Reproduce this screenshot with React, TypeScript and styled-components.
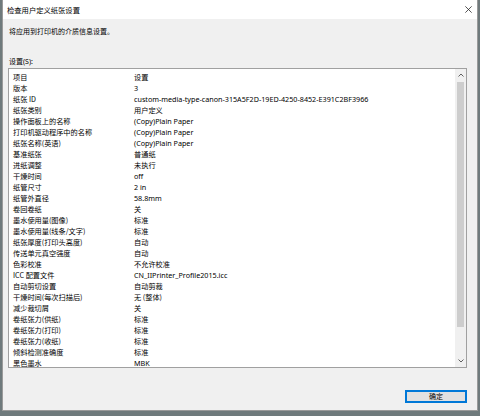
import styled, { createGlobalStyle } from "styled-components";

const GlobalStyle = createGlobalStyle`
    html, body {
        margin: 0;
        padding: 0;
        background: #6f7a7c;
    }
    body {
        font-family: "Noto Sans", "Noto Sans CJK SC", sans-serif;
        color: #000;
    }
`;

const Window = styled.div`
    width: 476px;
    height: 411px;
    margin-left: 2px;
    background: #f0f0f0;
    border: 1px solid #9a9a9a;
    border-top: none;
    box-sizing: border-box;
    display: flex;
    flex-direction: column;
`;

const TitleBar = styled.div`
    height: 19px;
    background: #fff;
    display: flex;
    align-items: center;
    justify-content: space-between;
    padding: 0 5px 0 4px;
    font-size: 7.3px;
    font-family: "Noto Sans CJK SC", sans-serif;
`;

const CloseIcon = styled.svg`
    width: 7px;
    height: 7px;
    margin-top: -1px;
`;

const Body = styled.div`
    flex: 1;
    display: flex;
    flex-direction: column;
    padding: 7px 10px 0 5px;
`;

const Description = styled.div`
    font-size: 7px;
    line-height: 11px;
    font-family: "Noto Sans CJK SC", sans-serif;
    margin-left: 1px;
`;

const FieldLabel = styled.div`
    margin-top: 19px;
    font-size: 7px;
    line-height: 11px;
    font-family: "Noto Sans", "Noto Sans CJK SC", sans-serif;
    margin-left: 1px;
`;

const ListBox = styled.div`
    margin-top: 1px;
    height: 300px;
    border: 1px solid #a0a0a0;
    background: #fff;
    box-sizing: border-box;
    display: flex;
    overflow: hidden;
`;

const Rows = styled.div`
    flex: 1;
    padding: 2px 0 0 4px;
`;

const Row = styled.div`
    display: grid;
    grid-template-columns: 121px 1fr;
    height: 11px;
    align-items: center;
    font-size: 7.2px;
    white-space: nowrap;
`;

const Cell = styled.span<{ $latin?: boolean }>`
    font-family: ${(p) =>
        p.$latin
            ? `"Noto Sans", "Noto Sans CJK SC", sans-serif`
            : `"Noto Sans CJK SC", "Noto Sans", sans-serif`};
`;

const ScrollBar = styled.div`
    width: 11px;
    background: #f0f0f0;
    display: flex;
    flex-direction: column;
    align-items: center;
`;

const Arrow = styled.svg`
    width: 6px;
    height: 4px;
    margin: 4px 0;
`;

const Thumb = styled.div`
    width: 7px;
    height: 245px;
    background: #cdcdcd;
    margin-top: 1px;
`;

const Spacer = styled.div`
    flex: 1;
`;

const Footer = styled.div`
    display: flex;
    justify-content: flex-end;
    margin-top: 22px;
`;

const OkButton = styled.button`
    width: 62px;
    height: 13px;
    padding: 0;
    background: #e1e1e1;
    border: 1px solid #0078d7;
    box-shadow: inset 0 0 0 1px #0078d7;
    font-size: 7px;
    font-family: "Noto Sans CJK SC", sans-serif;
    color: #000;
    line-height: 11px;
`;

const rows: [string, string][] = [
    ["项目", "设置"],
    ["版本", "3"],
    ["纸张 ID", "custom-media-type-canon-315A5F2D-19ED-4250-8452-E391C2BF3966"],
    ["纸张类别", "用户定义"],
    ["操作面板上的名称", "(Copy)Plain Paper"],
    ["打印机驱动程序中的名称", "(Copy)Plain Paper"],
    ["纸张名称(英语)", "(Copy)Plain Paper"],
    ["基准纸张", "普通纸"],
    ["进纸调整", "未执行"],
    ["干燥时间", "off"],
    ["纸管尺寸", "2 in"],
    ["纸管外直径", "58.8mm"],
    ["卷回卷纸", "关"],
    ["墨水使用量(图像)", "标准"],
    ["墨水使用量(线条/文字)", "标准"],
    ["纸张厚度(打印头高度)", "自动"],
    ["传送单元真空强度", "自动"],
    ["色彩校准", "不允许校准"],
    ["ICC 配置文件", "CN_IIPrinter_Profile2015.icc"],
    ["自动剪切设置", "自动剪裁"],
    ["干燥时间(每次扫描后)", "无 (整体)"],
    ["减少裁切屑", "关"],
    ["卷纸张力(供纸)", "标准"],
    ["卷纸张力(打印)", "标准"],
    ["卷纸张力(收纸)", "标准"],
    ["倾斜检测准确度", "标准"],
    ["黑色墨水", "MBK"],
];

const isLatin = (s: string) => /^[\x00-\x7f]+$/.test(s);

export default function App() {
    return (
        <>
            <GlobalStyle />
            <Window>
                <TitleBar>
                    <span>检查用户定义纸张设置</span>
                    <CloseIcon viewBox="0 0 10 10">
                        <path d="M0.5 0.5 L9.5 9.5 M9.5 0.5 L0.5 9.5" stroke="#222" strokeWidth="1.1" />
                    </CloseIcon>
                </TitleBar>
                <Body>
                    <Description>将应用到打印机的介质信息设置。</Description>
                    <FieldLabel>设置(S):</FieldLabel>
                    <ListBox>
                        <Rows>
                            {rows.map(([k, v], i) => (
                                <Row key={i}>
                                    <Cell $latin={isLatin(k)}>{k}</Cell>
                                    <Cell $latin={isLatin(v)}>{v}</Cell>
                                </Row>
                            ))}
                        </Rows>
                        <ScrollBar>
                            <Arrow viewBox="0 0 6 4">
                                <path d="M0.5 3.5 L3 1 L5.5 3.5" stroke="#606060" fill="none" strokeWidth="1" />
                            </Arrow>
                            <Thumb />
                            <Spacer />
                            <Arrow viewBox="0 0 6 4">
                                <path d="M0.5 0.5 L3 3 L5.5 0.5" stroke="#606060" fill="none" strokeWidth="1" />
                            </Arrow>
                        </ScrollBar>
                    </ListBox>
                    <Footer>
                        <OkButton>确定</OkButton>
                    </Footer>
                </Body>
            </Window>
        </>
    );
}
